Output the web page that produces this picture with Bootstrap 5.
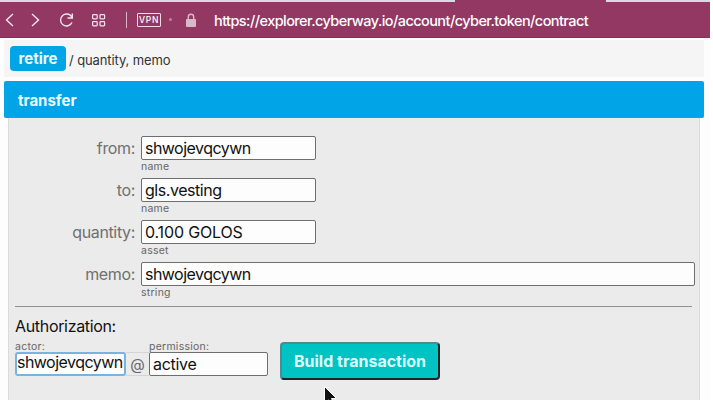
<!DOCTYPE html>
<html lang="en">
<head>
<meta charset="utf-8">
<meta name="viewport" content="width=device-width, initial-scale=1">
<title>cyber.token contract</title>
<link href="https://cdn.jsdelivr.net/npm/bootstrap@5.3.0/dist/css/bootstrap.min.css" rel="stylesheet">
<style>
  body { font-family: Inter, "Liberation Sans", sans-serif; font-size: 16px; line-height: 24px; color: #111; background: #fff; overflow: hidden; }
  .viewer { width: 710px; height: 400px; background: #fdfdfd; }
  .tabstrip { height: 2px; background: #dcd8e8; padding-left: 455px; }
  .tab-current { width: 151px; background: #923863; }
  .toolbar { height: 36px; background: #923863; color: #fff; border-bottom: 1px solid #853259; }
  .toolbar svg { display: block; flex: none; fill: none; stroke: #f6e4ee; stroke-width: 1.4; }
  .tool-sep { width: 1px; height: 16px; background: #d9b5c8; margin-left: 20px; }
  .vpn { width: 24px; height: 14px; border: 1px solid #f0dce7; border-radius: 1px; font-size: 8.5px; line-height: 12px; letter-spacing: .8px; margin-left: 10px; padding-left: 1px; font-weight: 500; }
  .vpn-dot { width: 3px; height: 3px; background: #bd83a0; margin-left: 8px; }
  .lock { margin-left: 13px; }
  .address { font-size: 14.5px; letter-spacing: -.57px; margin-left: 17px; line-height: 20px; font-weight: 500; padding-top: 2px; }
  .action-row { height: 37px; margin: 2px 6px 4px 4px; background: #f5f5f5; padding-left: 6px; }
  .action-row .btn { width: 56px; height: 25px; line-height: 25px; background: #00a4e7; color: #eafaff; border-radius: 4px; font-size: 15px; }
  .params { font-size: 13px; letter-spacing: -.1px; margin-left: 3px; color: #333; padding-top: 2px; }
  .action-head { width: 700px; height: 37px; margin-left: 4px; background: #00a4e7; border-bottom: 1px solid #2b9ac9; border-radius: 2px; color: #effcff; font-size: 15px; padding: 3px 0 0 14px; }
  .panel { width: 692px; height: 282px; margin-left: 8px; background: #ebebeb; border: solid #dadada; border-width: 0 1px; padding: 18px 0 0 6px; }
  .field { height: 42px; }
  .field label { width: 120px; margin-right: 6px; text-align: right; color: #707070; letter-spacing: -.35px; flex: none; }
  .panel .form-control { width: 175px; height: 24px; min-height: 0; padding: 0 3px; border: 1px solid #6e6e6e; border-radius: 2px; font-size: 16px; line-height: 22px; letter-spacing: -.53px; color: #111; background: #fdfdfd; }
  .panel #to { letter-spacing: -.45px; }
  .panel #quantity { letter-spacing: -.15px; }
  .panel .wide { width: 554px; }
  .hint { font-size: 10.5px; line-height: 13px; height: 12px; color: #666; letter-spacing: .25px; }
  .panel hr { width: 677px; margin: 2px 0 7px; border-top: 1px solid #929292; opacity: 1; }
  .auth-title { letter-spacing: -.33px; margin-bottom: 2px; }
  .panel .actor { width: 111px; border: 2px solid #77b4de; border-radius: 3px; padding: 0 0 4px 0; line-height: 16px; }
  .panel .permission { width: 119px; letter-spacing: -.3px; }
  .at { width: 23px; height: 24px; border: 1px solid #d5d5d5; border-width: 1px 0; color: #666; line-height: 23px; font-size: 15px; }
  .build { width: 160px; height: 38px; margin: 0 0 -4px 12px; background: #00c3c3; color: #dcffff; border: 2px solid; border-color: #4b8c8f #12282a #12282a #4b8c8f; border-radius: 4px; font-size: 16px; padding: 0; }
  .pointer { left: 323px; top: 386px; width: 13px; height: 14px; overflow: hidden; }
</style>
<script src="https://cdn.jsdelivr.net/npm/bootstrap@5.3.0/dist/js/bootstrap.bundle.min.js"></script>
</head>
<body>
<div class="viewer position-relative overflow-hidden">
  <div class="tabstrip d-flex"><div class="tab-current"></div></div>
  <nav class="toolbar d-flex align-items-center">
    <svg width="40" height="20" viewBox="0 0 40 20"><path d="M13 4 6.500 10 13 16M32 4l6.500 6L32 16"/></svg>
    <svg class="ms-3" width="24" height="20" viewBox="0 0 24 20"><path d="M15.800 7A6 6 0 1 0 16 12.500M16.300 3.500V8H11.500"/></svg>
    <svg class="ms-2" width="18" height="20" viewBox="0 0 18 20"><g stroke-width="1.200"><rect x="4.600" y="4.600" width="4.600" height="4.200" rx=".8"/><rect x="12" y="4.600" width="4.600" height="4.200" rx=".8"/><rect x="4.600" y="11.600" width="4.600" height="4.200" rx=".8"/><rect x="12" y="11.600" width="4.600" height="4.200" rx=".8"/></g></svg>
    <div class="tool-sep"></div>
    <div class="vpn">VPN</div>
    <div class="vpn-dot rounded-circle"></div>
    <svg class="lock" width="12" height="14" viewBox="0 0 12 14"><rect x="1" y="6" width="10" height="8" rx="1" fill="#d8b9ca" stroke="none"/><path d="M3.300 6V4a2.700 2.700 0 0 1 5.400 0v2" stroke="#d8b9ca"/></svg>
    <div class="address text-nowrap">https://explorer.cyberway.io/account/cyber.token/contract</div>
  </nav>
  <div class="action-row d-flex align-items-center">
    <button class="btn p-0 border-0 fw-bold">retire</button>
    <span class="params">/ quantity, memo</span>
  </div>
  <div class="action-head d-flex align-items-center fw-bold">transfer</div>
  <form class="panel">
    <div class="field d-flex"><label for="from">from:</label><div><input id="from" class="form-control" value="shwojevqcywn"><div class="hint">name</div></div></div>
    <div class="field d-flex"><label for="to">to:</label><div><input id="to" class="form-control" value="gls.vesting"><div class="hint">name</div></div></div>
    <div class="field d-flex"><label for="quantity">quantity:</label><div><input id="quantity" class="form-control" value="0.100 GOLOS"><div class="hint">asset</div></div></div>
    <div class="field d-flex"><label for="memo">memo:</label><div><input id="memo" class="form-control wide" value="shwojevqcywn"><div class="hint">string</div></div></div>
    <hr>
    <div class="auth-title">Authorization:</div>
    <div class="d-flex align-items-end">
      <div><label class="hint d-block" for="actor">actor:</label><input id="actor" class="form-control actor" value="shwojevqcywn"></div>
      <div class="at text-center">@</div>
      <div><label class="hint d-block" for="permission">permission:</label><input id="permission" class="form-control permission" value="active"></div>
      <button type="button" class="btn build fw-bold">Build transaction</button>
    </div>
  </form>
  <svg class="pointer position-absolute" viewBox="0 0 13 14"><path d="M1.500 .5v17l4-3.500 2 4 3-1-2-4.500h5z" fill="#111" stroke="#fff"/></svg>
</div>
</body>
</html>
